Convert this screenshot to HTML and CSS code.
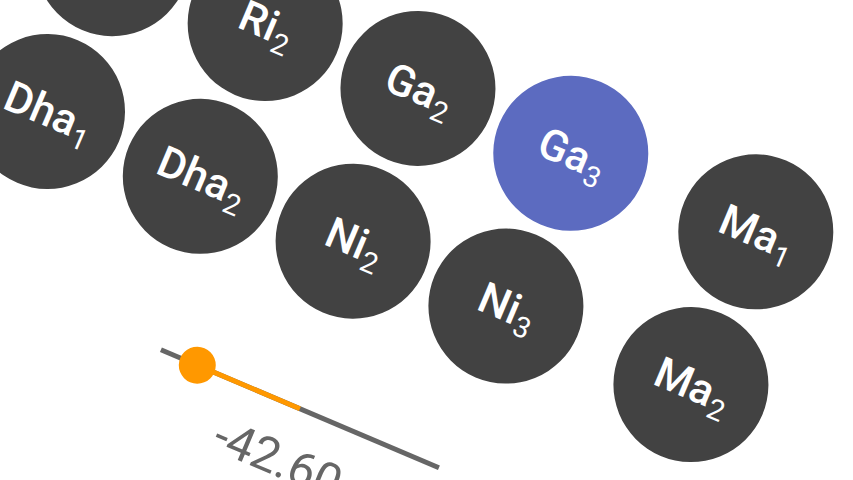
FILE: index.html
```html
<!DOCTYPE html>
<html>
<head>
<meta charset="utf-8">
<link rel="stylesheet" href="styles.css">
</head>
<body>
<div class="stage">
  <div class="board">
    <div class="keys">
      <div class="col">
        <div class="key">Ri<sub>1</sub></div>
        <div class="key">Dha<sub>1</sub></div>
      </div>
      <div class="col">
        <div class="key">Ri<sub>2</sub></div>
        <div class="key">Dha<sub>2</sub></div>
      </div>
      <div class="col">
        <div class="key">Ga<sub>2</sub></div>
        <div class="key">Ni<sub>2</sub></div>
      </div>
      <div class="col">
        <div class="key active">Ga<sub>3</sub></div>
        <div class="key">Ni<sub>3</sub></div>
      </div>
      <div class="col group">
        <div class="key">Ma<sub>1</sub></div>
        <div class="key">Ma<sub>2</sub></div>
      </div>
    </div>
    <div class="slider">
      <div class="track"></div>
      <div class="fill" style="left:40px;width:111px"></div>
      <div class="thumb" style="left:21.5px"></div>
    </div>
    <div class="value">-42.60</div>
  </div>
</div>
</body>
</html>
```

FILE: styles.css
```css
html, body {
  margin: 0;
  padding: 0;
  background: #ffffff;
  overflow: hidden;
}
.stage {
  width: 853px;
  height: 480px;
  overflow: hidden;
}
.board {
  display: flex;
  flex-direction: column;
  align-items: flex-start;
  margin-left: -30.5px;
  margin-top: -132.5px;
  transform-origin: 77.5px 243.5px;
  transform: rotate(23deg);
  font-family: Roboto, "Noto Sans", sans-serif;
}
.keys {
  display: flex;
  gap: 11px;
}
.col {
  display: flex;
  flex-direction: column;
  gap: 11px;
}
.col.group {
  margin-left: 35px;
}
.key {
  width: 155px;
  height: 155px;
  border-radius: 50%;
  background: #424242;
  color: #ffffff;
  display: flex;
  align-items: center;
  justify-content: center;
  padding-left: 4px;
  box-sizing: border-box;
  font-size: 43px;
  font-weight: 500;
  line-height: 1;
}
.key.active {
  background: #5c6bc0;
}
.key sub {
  position: relative;
  top: 14px;
  margin-left: 1px;
  font-size: 29px;
  font-weight: 400;
  vertical-align: -10px;
  line-height: 1;
}
.slider {
  position: relative;
  margin-top: 79px;
  margin-left: 274.5px;
  width: 302px;
  height: 37px;
}
.track {
  margin-top: 16px;
  height: 5px;
  background: #666666;
}
.fill {
  position: absolute;
  top: 16px;
  height: 5px;
  background: #ff9800;
}
.thumb {
  position: absolute;
  top: 0;
  width: 37px;
  height: 37px;
  border-radius: 50%;
  background: #ff9800;
}
.value {
  margin-top: 13px;
  width: 302px;
  margin-left: 274.5px;
  text-align: center;
  font-size: 48px;
  line-height: 48px;
  color: #666666;
}
```
